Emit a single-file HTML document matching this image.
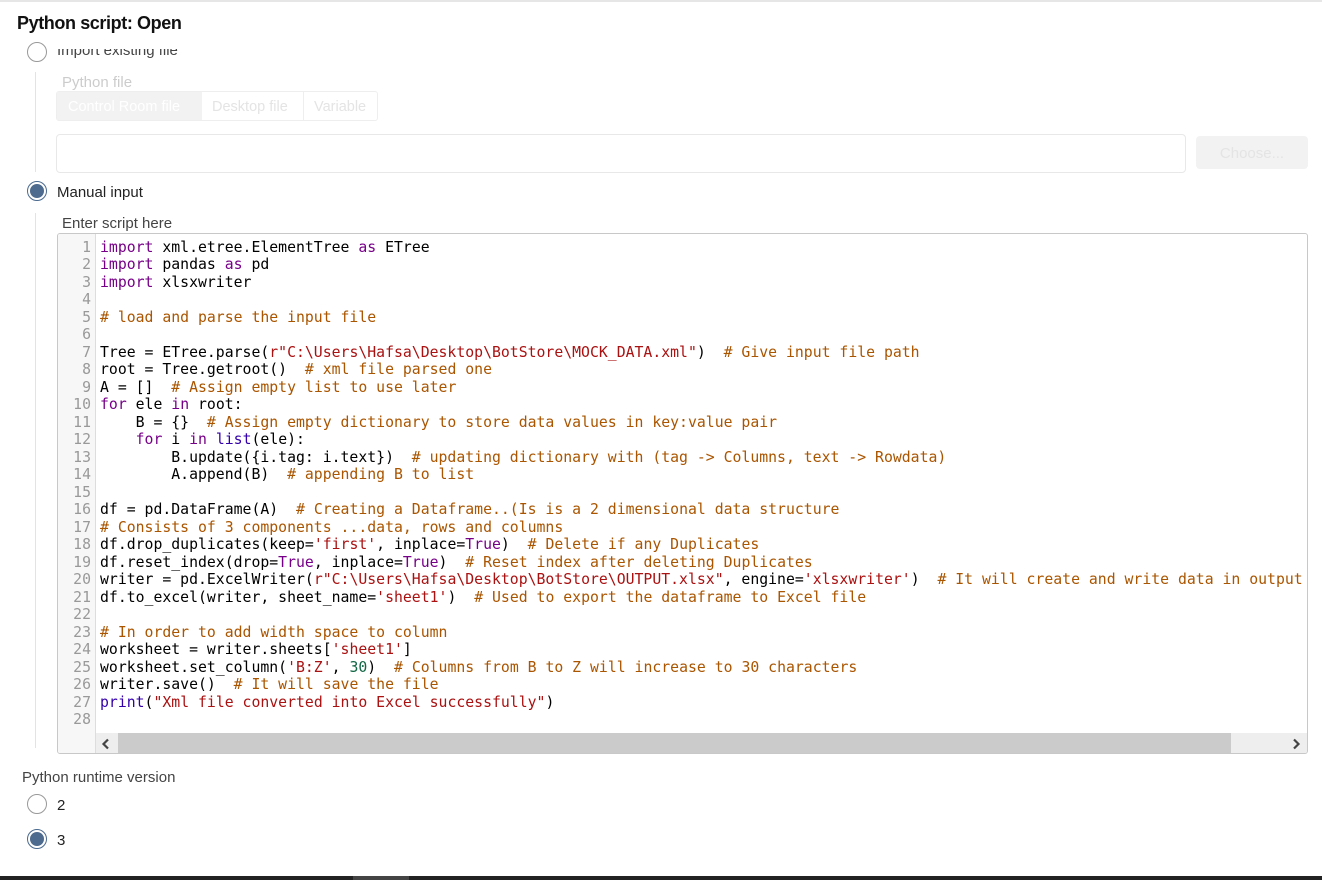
<!DOCTYPE html>
<html><head><meta charset="utf-8"><style>
*{box-sizing:border-box;margin:0;padding:0}
body{width:1322px;height:880px;background:#fff;position:relative;overflow:hidden;font-family:"Liberation Sans",sans-serif;color:#333}
.a{position:absolute}
.topline{left:0;top:0;width:1322px;height:2px;background:#e6e6e6}
h1{position:absolute;left:17px;top:13px;font-size:18px;font-weight:bold;color:#111;letter-spacing:-0.4px}
.radio{position:absolute;width:20px;height:20px;border-radius:50%;border:1px solid #999;background:#fff}
.radio.on{border:1px solid #4a6a8f}
.radio.on::after{content:"";position:absolute;left:2px;top:2px;width:14px;height:14px;border-radius:50%;background:#4d6b8e}
.lbl{position:absolute;font-size:15px;color:#222}
.vline{position:absolute;width:1px;background:#e3e3e3}
.ed{left:57px;top:233px;width:1251px;height:521px;border:1px solid #c8c8c8;border-radius:3px;overflow:hidden}
.gut{position:absolute;left:0;top:0;width:38px;height:100%;background:#f7f7f7;border-right:1px solid #ddd}
pre{position:absolute;top:5px;font-family:"DejaVu Sans Mono",monospace;font-size:14.8px;line-height:17.48px;white-space:pre}
.nums{left:0;width:33px;text-align:right;color:#999}
.code{left:42px;color:#000}
.k{color:#770088}.c{color:#aa5500}.s{color:#aa1111}.n{color:#116644}.b{color:#3300aa}
.sb{position:absolute;left:38px;top:499px;width:1212px;height:21px;background:#eee}
.thumb{position:absolute;left:22px;top:0;width:1113px;height:21px;background:#cbcbcb}
</style></head><body>
<div class="a topline"></div>
<h1>Python script: Open</h1>
<div class="radio" style="left:27px;top:42px"></div>
<div class="lbl" style="left:57px;top:42px;color:#444;clip-path:inset(7px 0 0 0)">Import existing file</div>
<div class="vline" style="left:35px;top:72px;height:100px"></div>
<div class="lbl" style="left:62px;top:74px;color:#ccc">Python file</div>
<div class="a" style="left:56px;top:91px;width:322px;height:30px;border:1px solid #eee;border-radius:3px;display:flex;font-size:14.5px;color:#e4e4e4;line-height:30px">
<div style="width:145px;background:#f2f2f2;padding-left:11px;color:#fff">Control Room file</div>
<div style="width:102px;border-right:1px solid #eee;padding-left:10px">Desktop file</div>
<div style="padding-left:10px">Variable</div></div>
<div class="a" style="left:56px;top:134px;width:1130px;height:39px;border:1px solid #e8e8e8;border-radius:4px"></div>
<div class="a" style="left:1196px;top:136px;width:112px;height:33px;background:#f2f2f2;border-radius:4px;color:#e4e4e4;font-size:15px;line-height:35px;text-align:center">Choose...</div>
<div class="radio on" style="left:27px;top:181px"></div>
<div class="lbl" style="left:57px;top:184px">Manual input</div>
<div class="vline" style="left:35px;top:213px;height:535px"></div>
<div class="lbl" style="left:62px;top:215px;color:#444">Enter script here</div>
<div class="a ed">
<div class="gut"></div>
<pre class="nums">1
2
3
4
5
6
7
8
9
10
11
12
13
14
15
16
17
18
19
20
21
22
23
24
25
26
27
28</pre>
<pre class="code"><span class="k">import</span> xml.etree.ElementTree <span class="k">as</span> ETree
<span class="k">import</span> pandas <span class="k">as</span> pd
<span class="k">import</span> xlsxwriter

<span class="c"># load and parse the input file</span>

Tree = ETree.parse(<span class="s">r"C:\Users\Hafsa\Desktop\BotStore\MOCK_DATA.xml"</span>)  <span class="c"># Give input file path</span>
root = Tree.getroot()  <span class="c"># xml file parsed one</span>
A = []  <span class="c"># Assign empty list to use later</span>
<span class="k">for</span> ele <span class="k">in</span> root:
    B = {}  <span class="c"># Assign empty dictionary to store data values in key:value pair</span>
    <span class="k">for</span> i <span class="k">in</span> <span class="b">list</span>(ele):
        B.update({i.tag: i.text})  <span class="c"># updating dictionary with (tag -&gt; Columns, text -&gt; Rowdata)</span>
        A.append(B)  <span class="c"># appending B to list</span>

df = pd.DataFrame(A)  <span class="c"># Creating a Dataframe..(Is is a 2 dimensional data structure</span>
<span class="c"># Consists of 3 components ...data, rows and columns</span>
df.drop_duplicates(keep=<span class="s">'first'</span>, inplace=<span class="k">True</span>)  <span class="c"># Delete if any Duplicates</span>
df.reset_index(drop=<span class="k">True</span>, inplace=<span class="k">True</span>)  <span class="c"># Reset index after deleting Duplicates</span>
writer = pd.ExcelWriter(<span class="s">r"C:\Users\Hafsa\Desktop\BotStore\OUTPUT.xlsx"</span>, engine=<span class="s">'xlsxwriter'</span>)  <span class="c"># It will create and write data in output</span>
df.to_excel(writer, sheet_name=<span class="s">'sheet1'</span>)  <span class="c"># Used to export the dataframe to Excel file</span>

<span class="c"># In order to add width space to column</span>
worksheet = writer.sheets[<span class="s">'sheet1'</span>]
worksheet.set_column(<span class="s">'B:Z'</span>, <span class="n">30</span>)  <span class="c"># Columns from B to Z will increase to 30 characters</span>
writer.save()  <span class="c"># It will save the file</span>
<span class="b">print</span>(<span class="s">"Xml file converted into Excel successfully"</span>)
</pre>
<div class="sb"><div class="thumb"></div>
<svg class="a" style="left:4px;top:5px" width="12" height="12" viewBox="0 0 12 12"><path d="M8 1.5L3.5 6L8 10.5" stroke="#444" stroke-width="2.2" fill="none"/></svg>
<svg class="a" style="left:1194px;top:5px" width="12" height="12" viewBox="0 0 12 12"><path d="M4 1.5L8.5 6L4 10.5" stroke="#444" stroke-width="2.2" fill="none"/></svg>
</div>
</div>
<div class="lbl" style="left:22px;top:769px;color:#444">Python runtime version</div>
<div class="radio" style="left:27px;top:794px"></div>
<div class="lbl" style="left:57px;top:797px">2</div>
<div class="radio on" style="left:27px;top:829px"></div>
<div class="lbl" style="left:57px;top:832px">3</div>
<div class="a" style="left:0;top:876px;width:1322px;height:4px;background:#222"></div>
<div class="a" style="left:353px;top:876px;width:56px;height:4px;background:#444"></div>
</body></html>
